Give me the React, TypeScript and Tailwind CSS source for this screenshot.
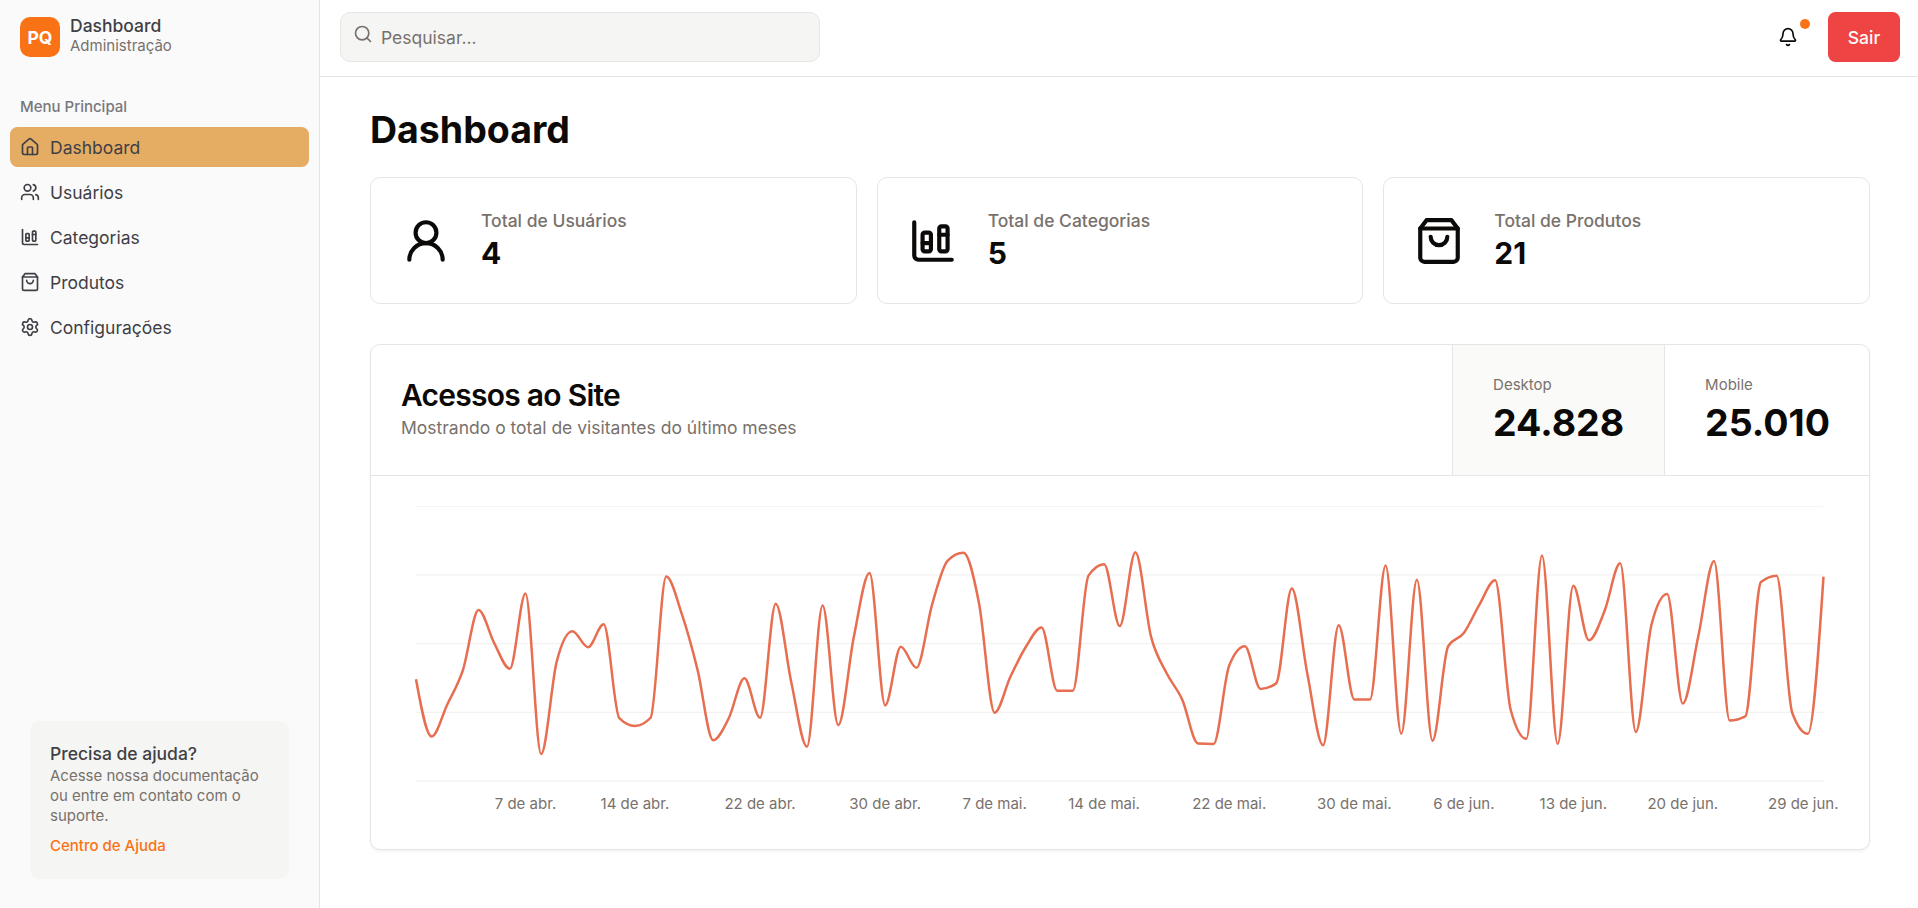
import type { ReactNode } from "react";
import { Bell, ChartColumnStacked, House, Search, Settings, UserRound, Users } from "lucide-react";

const desktopVisits: number[] = [
  222, 97, 167, 242, 373, 301, 245, 409, 59, 261, 327, 292, 342, 137, 120, 138, 446, 364, 243, 89,
  137, 224, 138, 387, 215, 75, 383, 122, 315, 454, 165, 293, 247, 385, 481, 498, 388, 149, 227, 293,
  335, 197, 197, 448, 473, 338, 499, 315, 235, 177, 82, 81, 252, 294, 201, 213, 420, 233, 78, 340,
  178, 178, 470, 103, 439, 88, 294, 323, 385, 438, 155, 92, 492, 81, 426, 307, 371, 475, 107, 341,
  408, 169, 317, 480, 132, 141, 434, 448, 149, 103, 446,
];

const CHART = { width: 1150, height: 250, left: 12, right: 1138, bottom: 220, max: 600 };

const xAt = (i: number) =>
  CHART.left + (i * (CHART.right - CHART.left)) / (desktopVisits.length - 1);
const yAt = (v: number) => CHART.bottom * (1 - v / CHART.max);

const ticks: { x: number; label: string }[] = [
  { x: xAt(7), label: "7 de abr." },
  { x: xAt(14), label: "14 de abr." },
  { x: xAt(22), label: "22 de abr." },
  { x: xAt(30), label: "30 de abr." },
  { x: xAt(37), label: "7 de mai." },
  { x: xAt(44), label: "14 de mai." },
  { x: xAt(52), label: "22 de mai." },
  { x: xAt(60), label: "30 de mai." },
  { x: xAt(67), label: "6 de jun." },
  { x: xAt(74), label: "13 de jun." },
  { x: xAt(81), label: "20 de jun." },
  { x: 1121.8, label: "29 de jun." },
];

/** Monotone cubic interpolation through equally spaced points. */
function monotonePath(values: number[]): string {
  const pts = values.map((v, i) => ({ x: xAt(i), y: yAt(v) }));
  const n = pts.length;
  const slopes = pts.slice(1).map((p, i) => (p.y - pts[i].y) / (p.x - pts[i].x));
  const m: number[] = new Array(n).fill(0);
  for (let i = 1; i < n - 1; i++) {
    const a = slopes[i - 1];
    const b = slopes[i];
    const p = (a + b) / 2;
    m[i] = (Math.sign(a) + Math.sign(b)) * Math.min(Math.abs(a), Math.abs(b), 0.5 * Math.abs(p)) || 0;
  }
  m[0] = (3 * slopes[0] - m[1]) / 2;
  m[n - 1] = (3 * slopes[n - 2] - m[n - 2]) / 2;
  let d = `M${pts[0].x},${pts[0].y}`;
  for (let i = 1; i < n; i++) {
    const dx = (pts[i].x - pts[i - 1].x) / 3;
    d += `C${pts[i - 1].x + dx},${pts[i - 1].y + dx * m[i - 1]},${pts[i].x - dx},${pts[i].y - dx * m[i]},${pts[i].x},${pts[i].y}`;
  }
  return d;
}

function BagIcon({ className }: { className?: string }) {
  return (
    <svg
      viewBox="0 0 24 24"
      fill="none"
      stroke="currentColor"
      strokeWidth="2"
      strokeLinecap="round"
      strokeLinejoin="round"
      className={className}
    >
      <path d="M6 2 3 6v14a2 2 0 0 0 2 2h14a2 2 0 0 0 2-2V6l-3-4Z" />
      <path d="M3 6h18" />
      <path d="M16 10a4 4 0 0 1-8 0" />
    </svg>
  );
}

function NavItem({ icon, label, active }: { icon: ReactNode; label: string; active?: boolean }) {
  return (
    <a
      className={`flex h-8 items-center gap-2 rounded-md px-2 text-sm text-[#3f3f46] ${active ? "bg-[#e5ad63]" : ""}`}
    >
      {icon}
      <span>{label}</span>
    </a>
  );
}

function Sidebar() {
  return (
    <aside className="flex h-full w-64 shrink-0 flex-col border-r border-[#e5e5e5] bg-[#fafafa] text-[#3f3f46]">
      <div className="flex items-center gap-2 px-4 pt-[9.6px]">
        <div className="mt-1 flex size-8 items-center justify-center rounded-lg bg-[#f97316] text-sm font-bold text-white">
          PQ
        </div>
        <div className="flex flex-col gap-0.5">
          <span className="text-sm leading-4 font-medium">Dashboard</span>
          <span className="text-xs leading-3 text-[#78716c]">Administração</span>
        </div>
      </div>
      <div className="mt-6 flex flex-col px-2">
        <div className="flex h-8 items-center px-2 text-xs font-medium text-[#78787c]">Menu Principal</div>
        <nav className="flex flex-col gap-1">
          <NavItem active icon={<House className="size-4" />} label="Dashboard" />
          <NavItem icon={<Users className="size-4" />} label="Usuários" />
          <NavItem icon={<ChartColumnStacked className="size-4" />} label="Categorias" />
          <NavItem icon={<BagIcon className="size-4" />} label="Produtos" />
          <NavItem icon={<Settings className="size-4" />} label="Configurações" />
        </nav>
      </div>
      <div className="mx-6 mt-auto mb-[23.2px] rounded-lg bg-[#f5f5f4] p-4 pb-[18.4px]">
        <p className="text-sm font-medium">Precisa de ajuda?</p>
        <p className="text-xs text-[#78716c]">Acesse nossa documentação ou entre em contato com o suporte.</p>
        <a className="mt-2 block text-xs font-medium text-[#f97316]">Centro de Ajuda</a>
      </div>
    </aside>
  );
}

function TopBar() {
  return (
    <header className="flex h-[61.6px] items-start justify-between border-b border-[#e5e5e5] px-4 pt-[9.6px]">
      <div className="relative w-96">
        <Search className="absolute top-[9.2px] left-2.5 size-4 text-[#78716c]" />
        <input
          placeholder="Pesquisar..."
          className="block h-10 w-full rounded-lg border border-[#e5e5e5] bg-[#f5f5f4] pr-3 pl-8 text-sm placeholder:text-[#78716c]"
        />
      </div>
      <div className="flex items-center gap-3">
        <button className="relative flex size-10 items-center justify-center">
          <Bell className="size-4" />
          <span className="absolute top-[5.6px] right-[2.8px] size-2 rounded-full bg-[#f97316]" />
        </button>
        <button className="h-10 w-[57.6px] rounded-md bg-[#ef4444] text-sm font-medium text-[#fafaf9]">Sair</button>
      </div>
    </header>
  );
}

function StatCard({ icon, title, value }: { icon: ReactNode; title: string; value: string }) {
  return (
    <div className="flex items-center gap-6 rounded-lg border border-[#e5e5e5] p-6">
      <div className="pt-px">{icon}</div>
      <div className="flex flex-col">
        <span className="text-sm font-medium text-[#78716c]">{title}</span>
        <span className="mt-[0.8px] -mb-[0.8px] text-2xl font-bold">{value}</span>
      </div>
    </div>
  );
}

function VisitsCard() {
  return (
    <section className="mt-8 rounded-lg border border-[#e5e5e5] bg-white shadow-xs">
      <div className="flex items-stretch border-b border-[#e5e5e5]">
        <div className="flex flex-1 flex-col justify-center gap-1 px-6">
          <h2 className="text-2xl leading-none font-semibold tracking-tight">Acessos ao Site</h2>
          <p className="text-sm text-[#78716c]">Mostrando o total de visitantes do último meses</p>
        </div>
        <button className="flex flex-col gap-1 border-l border-[#e5e5e5] bg-[#fafaf9] px-8 py-6 text-left">
          <span className="text-xs text-[#78716c]">Desktop</span>
          <span className="text-3xl font-bold">24.828</span>
        </button>
        <button className="flex flex-col gap-1 border-l border-[#e5e5e5] py-6 pr-[31.2px] pl-8 text-left">
          <span className="text-xs text-[#78716c]">Mobile</span>
          <span className="text-3xl font-bold">25.010</span>
        </button>
      </div>
      <div className="p-6 pb-[24.6px]">
        <svg
          width={CHART.width}
          height={CHART.height}
          viewBox={`0 0 ${CHART.width} ${CHART.height}`}
          className="block overflow-hidden"
        >
          {[0, 55, 110, 165, 220].map((y) => (
            <line key={y} x1={CHART.left} x2={CHART.right} y1={y} y2={y} stroke="#e7e5e4" strokeOpacity="0.5" />
          ))}
          <path d={monotonePath(desktopVisits)} fill="none" stroke="#e76e50" strokeWidth="2" />
          {ticks.map((t) => (
            <text key={t.label} x={t.x} y="242.5" textAnchor="middle" fill="#78716c" className="text-xs">
              {t.label}
            </text>
          ))}
        </svg>
      </div>
    </section>
  );
}

export default function App() {
  return (
    <div className="h-[908px] w-[1918px] overflow-hidden bg-white">
      <div className="flex h-[726.4px] w-[1536px] font-['Inter',sans-serif] text-[#0c0a09] [zoom:1.25]">
        <Sidebar />
        <div className="flex min-w-0 flex-1 flex-col">
          <TopBar />
          <main className="px-10 pt-6">
            <h1 className="text-3xl font-bold">Dashboard</h1>
            <div className="mt-5 grid grid-cols-3 gap-4">
              <StatCard icon={<UserRound className="size-10" />} title="Total de Usuários" value="4" />
              <StatCard icon={<ChartColumnStacked className="size-10" />} title="Total de Categorias" value="5" />
              <StatCard icon={<BagIcon className="size-10" />} title="Total de Produtos" value="21" />
            </div>
            <VisitsCard />
          </main>
        </div>
      </div>
    </div>
  );
}
